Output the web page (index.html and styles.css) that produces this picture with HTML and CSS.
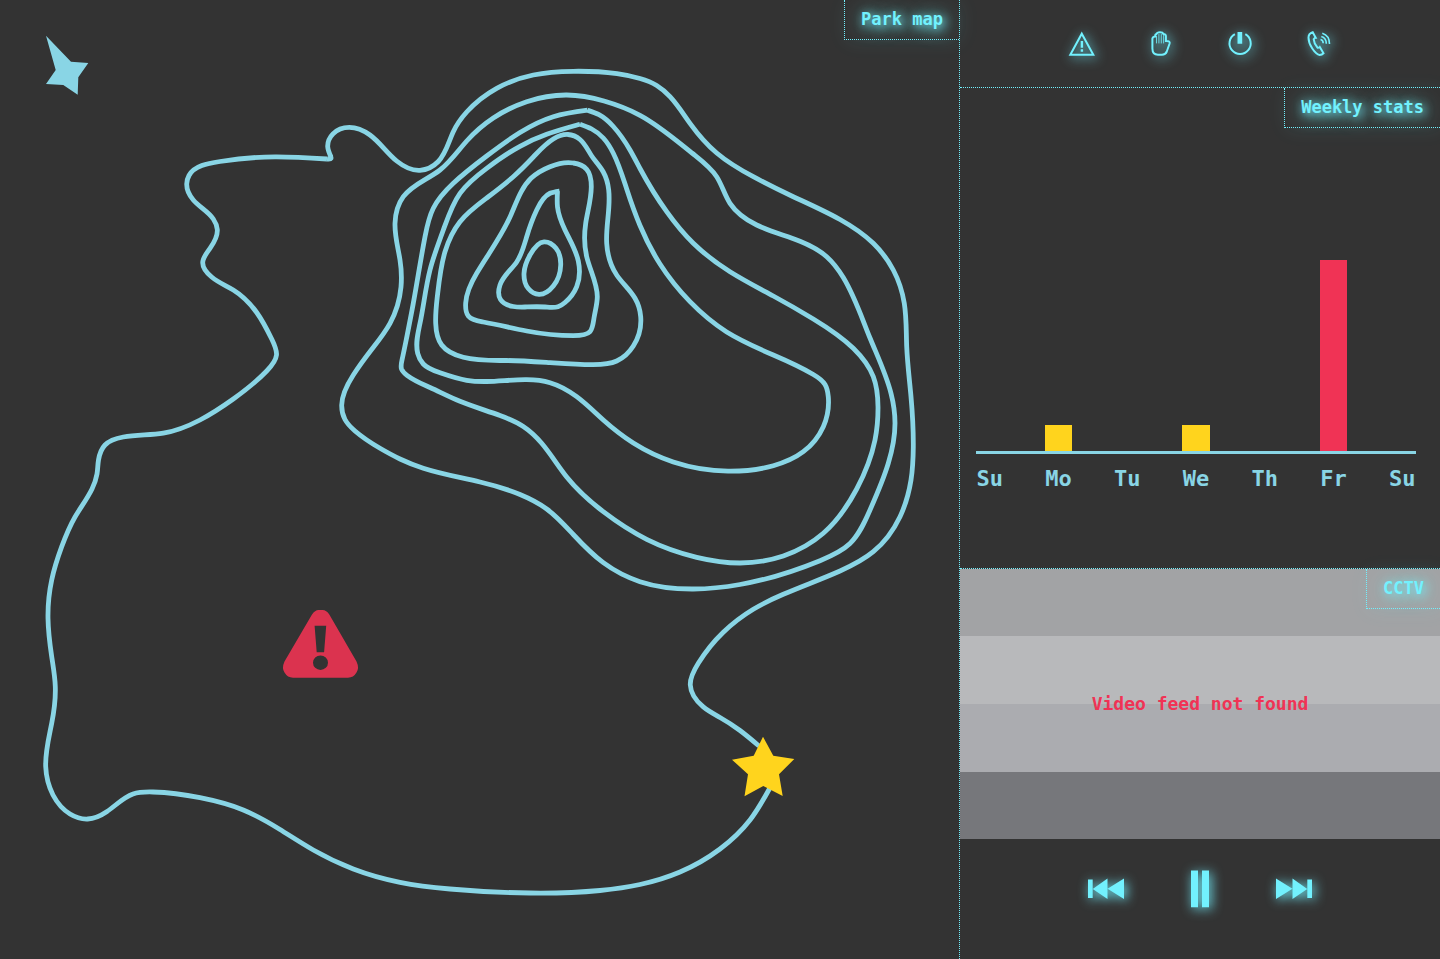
FILE: index.html
```html
<!DOCTYPE html>
<html lang="en">
<head>
<meta charset="utf-8">
<meta name="viewport" content="width=device-width, initial-scale=1">
<title>Park control</title>
<link rel="stylesheet" href="styles.css">
</head>
<body>
<div class="dashboard">
  <main class="map">
    <h2 class="panel-label">Park map</h2>
    <svg class="map-drawing" viewBox="0 0 959 959" role="img" aria-label="Contour map of the park">
      <path class="compass" d="M46 35.7 71 61.7 88.3 63 78.3 77.3 77.7 94.7 63.3 85 46 84 55.7 70Z"/>
      <g class="contours" id="contours"></g>
      <path class="alert" fill-rule="evenodd" d="M312 614.6Q315 610 318.500 610H322.500Q326.500 610 329.300 614.600L356.500 661.500Q359.500 668 356.500 672.500Q353.500 677.700 348 677.700H293Q287.500 677.700 284.500 672.500Q281.500 668 284.500 661.500ZM314.600 625.700 316.700 652.200H324.100L326.200 625.700ZM328 662.700A7.500 7.300 0 1 0 313 662.700A7.500 7.300 0 1 0 328 662.700Z"/>
      <path class="entrance" d="M763 736.700 773.300 755.700 794.300 759 779 774.300 782.700 796 763.300 786 744.500 796.200 748 774.300 732 759.700 753.700 755.700Z"/>
    </svg>
  </main>
  <aside class="side">
    <nav class="actions" aria-label="Actions">
      <button class="icon-button" type="button" aria-label="Raise alert">
        <svg class="icon" viewBox="0 0 28 28"><path class="line" d="M13.800 3.700 25.300 24.700H2.300Z"/><path class="solid" d="M12.700 11h2.400v6.700h-2.400zM12.700 19.300h2.400v2.400h-2.400z"/></svg>
      </button>
      <button class="icon-button" type="button" aria-label="Stop">
        <svg class="icon" viewBox="0 0 28 28"><path class="line" d="M5.400 8.500V18.500Q5.400 24.700 11 24.700H15Q18.500 24.700 19.800 21.500L22.600 13.500Q23.400 10.700 18.900 10.900V6Q18.500 4 16.500 4Q15.800 2.300 13 2.300Q10 2.300 9.300 4.200Q8 4 8.300 6.500Q6 6.500 5.400 8.500Z"/><path class="hairline" d="M9.500 6v7.400M11.900 4v9.400M14.300 4v9.400M16.600 5v8.400"/></svg>
      </button>
      <button class="icon-button" type="button" aria-label="Power">
        <svg class="icon" viewBox="0 0 28 28"><path class="line" d="M8.900 4.200A10.600 10.600 0 1 0 19.300 4.200"/><path class="solid" d="M11.500 2h4.700v11.700h-4.700z"/></svg>
      </button>
      <button class="icon-button" type="button" aria-label="Call">
        <svg class="icon" viewBox="0 0 28 28"><path class="line" d="M7.700 2.300Q3.600 3.500 3.500 7.500Q3.500 13 7.300 18.500Q11.300 24.500 14.600 24.900Q17 24.900 18.500 23.300L14.800 17Q14 18 12.500 17.700Q9 13.500 8.700 9.200Q9.500 7.800 10.700 7.800Z"/><path class="hairline waves" d="M15.500 9.500Q18.200 10 18.200 13.300M16.300 6.400Q21.300 7.700 21.300 13.700M17.300 3.200Q24.500 5.500 24.500 14"/></svg>
      </button>
    </nav>

    <section class="stats">
      <h2 class="panel-label">Weekly stats</h2>
      <div class="plot" role="img" aria-label="Incidents per day">
        <div class="bar" style="height:0%"></div>
        <div class="bar" style="height:10%"></div>
        <div class="bar" style="height:0%"></div>
        <div class="bar" style="height:10%"></div>
        <div class="bar" style="height:0%"></div>
        <div class="bar bar-high" style="height:72%"></div>
        <div class="bar" style="height:0%"></div>
      </div>
      <div class="days">
        <span class="day">Su</span><span class="day">Mo</span><span class="day">Tu</span><span class="day">We</span><span class="day">Th</span><span class="day">Fr</span><span class="day">Su</span>
      </div>
    </section>

    <section class="cctv">
      <h2 class="panel-label">CCTV</h2>
      <p class="feed-message">Video feed not found</p>
    </section>

    <div class="controls">
      <button class="media-button" type="button" aria-label="Previous">
        <svg class="icon" viewBox="0 0 36 40"><path class="solid" d="M0 10.500h4.700v18.500H0zM4.700 19.900 19.500 9.500v10.300L36 9.500V30L19.500 19.800V30z"/></svg>
      </button>
      <button class="media-button" type="button" aria-label="Pause">
        <svg class="icon" viewBox="0 0 36 40"><path class="solid" d="M9 1.500h7v36.700H9zM20 1.500h7v36.700h-7z"/></svg>
      </button>
      <button class="media-button" type="button" aria-label="Next">
        <svg class="icon" viewBox="0 0 36 40"><path class="solid" d="M36 10.500h-4.700v18.500H36zM31.300 19.900 16.500 9.500v10.300L0 9.500V30l16.500-10.200V30z"/></svg>
      </button>
    </div>
  </aside>
</div>
<script src="map.js"></script>
</body>
</html>
```
FILE: styles.css
```css
:root {
  --bg: #333333;
  --glow: #72f1fe;
  --line: #89d5e5;
  --yellow: #ffd41d;
  --red: #f03355;
}

* {
  box-sizing: border-box;
}

body {
  margin: 0;
  background: var(--bg);
  color: var(--line);
  font-family: "DejaVu Sans Mono", "Liberation Mono", monospace;
}

.dashboard {
  display: grid;
  grid-template-columns: 2fr 1fr;
  min-height: 100vh;
}

.map {
  position: relative;
  border-right: 1px dotted var(--glow);
}

.map-drawing {
  display: block;
  width: 100%;
  height: auto;
}

.contours {
  fill: none;
  stroke: var(--line);
  stroke-width: 4.8;
  stroke-linejoin: round;
}

.compass {
  fill: var(--line);
}

.alert {
  fill: #db334f;
}

.entrance {
  fill: var(--yellow);
}

.panel-label {
  position: absolute;
  top: 0;
  right: 0;
  margin: 0;
  padding: 0 16px;
  border: 1px dotted var(--glow);
  border-width: 0 0 1px 1px;
  color: var(--glow);
  font-size: 17px;
  font-weight: 700;
  line-height: 39px;
  text-shadow: 2px 2px 10px var(--glow), 2px 2px 20px var(--glow);
  box-shadow: 2px 2px 20px rgba(114, 241, 254, 0.08);
}

.side {
  display: flex;
  flex-direction: column;
  min-width: 0;
}

.actions {
  display: flex;
  align-items: center;
  justify-content: center;
  gap: 51px;
  height: 88px;
  border-bottom: 1px dotted var(--glow);
}

.icon-button,
.media-button {
  padding: 0;
  border: 0;
  background: none;
  color: var(--glow);
  cursor: pointer;
}

.icon-button {
  width: 28px;
  height: 28px;
}

.media-button {
  width: 36px;
  height: 40px;
}

.icon {
  display: block;
  width: 100%;
  height: 100%;
  overflow: visible;
  filter: drop-shadow(2px 2px 6px var(--glow));
}

.line {
  fill: none;
  stroke: currentColor;
  stroke-width: 2;
}

.hairline {
  fill: none;
  stroke: currentColor;
  stroke-width: 0.8;
}

.waves {
  stroke-width: 1.6;
}

.solid {
  fill: currentColor;
}

.stats {
  position: relative;
  display: flex;
  flex-direction: column;
  gap: 10px;
  padding: 98px 24px 74px 16px;
  border-bottom: 1px dotted var(--glow);
}

.plot,
.days {
  display: flex;
  justify-content: space-between;
}

.plot {
  align-items: flex-end;
  height: 268px;
  border-bottom: 3px solid var(--line);
}

.bar {
  width: 6.25%;
  background: var(--yellow);
}

.bar-high {
  background: var(--red);
}

.day {
  display: flex;
  justify-content: center;
  width: 6.25%;
  font-size: 22px;
  font-weight: 700;
  line-height: 30px;
}

.cctv {
  position: relative;
  display: grid;
  place-items: center;
  aspect-ratio: 16 / 9;
  background: linear-gradient(#a2a3a5 25%, #b8b9bb 25% 50%, #abacb0 50% 75%, #76777b 75%);
}

.feed-message {
  margin: 0;
  color: var(--red);
  font-size: 18px;
  font-weight: 700;
  line-height: 24px;
}

.controls {
  display: flex;
  justify-content: center;
  gap: 58px;
  padding: 30px 0 48px;
}
```
FILE: map.js
```js
// Contour lines as x,y pairs. "closed" rings are smooth all the way round;
// the others start and finish at a sharp corner.
const contours = [
  { points: "759,746 740,730.5 720,717.5 703,706.7 690.3,685 698.3,663.3 723.3,632.3 753.3,609.3 783.3,594.3 840,571 873.3,551.7 900,516.7 911,480 913.3,446.7 911,396.7 906.7,346.7 904.3,303.3 893.3,270 873.3,243.3 840,219.5 793.3,196.7 753.3,176.7 716.7,153 690,123.3 670,96.7 656.7,85.5 640,78.5 617,73.7 573.3,71.3 533.3,75 496.7,88.3 466.7,112 453.3,131.7 438.3,161.5 420,170.3 396.7,161 370,135 349.3,127.3 333,133.8 327.7,146.7 331,157" },
  { points: "330.500,155.500 331,158.500 327,159" },
  { points: "327,159 275,156.8 220,161.5 189,175.5 186.7,184 193.3,200 213.3,219 217.3,229.5 210,248.3 202.7,262.7 211.7,277 233.3,290 256.7,312.5 271.7,339 276.5,355 266.7,371 233.3,399 200,420 163.3,433.2 123.3,437 105,445 98.5,460 97,474 92,489 75,517 61.7,546.7 51.7,580 48,618.3 51.7,656.7 55.3,686.7 51.7,723.3 45.7,766.7 53,795 70,814 87.7,819 106.7,811.7 133,794 153,792 200,797.7 243.3,810 280,829.5 313.3,850 353.3,869 400,882.300 450,889 530,893 600,890.500 640,884.500 680,872 720,849 750,820 771,786" },
  { closed: true, points: "566.7,95 526.7,101.7 493.3,118 466.7,141 440,170 403.3,196.7 395,223.3 400,260 401,287 390,323.3 372,349 353.3,375 341.7,405 345,419.500 355,431 380,448.300 400,459 423.3,468.3 480,482 520,494.500 546.7,509 573.3,534.500 603.3,562.700 640,581.700 693.3,589 740,584.500 820,560.700 850,543.500 870,510 888.3,463.300 895,423.300 891,393.300 870,338 843.3,277.500 826.7,256.700 800,241.200 756.7,225 730,203.300 716.7,176.700 693.3,154 640,115.300 604,101" },
  { points: "587.500,110.200 553.3,116.700 520,132.500 486.7,156 453.3,183.300 433.3,208.300 425,236.700 413.3,303.300 407,336 402,360 401.500,369 407,375.300 430,387.500 460,401.300 500,415.500 523.3,426.500 541.7,443.300 566.7,477 603.3,511.700 646.7,539.300 696.7,557.300 740,563 783.3,556 823.3,533.300 856.7,489 875,440 878,406.700 873.3,376.700 853.3,348.300 813.3,319 773.3,296 730,271.700 693.3,243.300 666.7,211.700 640,168.500 630,150 613.3,126.500 599,114.700 587.500,110.200" },
  { points: "580,124.200 546.7,134.300 520,146.300 486.7,168.300 460,193.300 443.3,230 430,270 420,323.300 417.7,353.300 423.3,364 440,372.700 466.7,380.300 486.7,381.500 526.7,379.700 550,382.700 576.7,396.700 603.3,420 633.3,443 673.3,462 728,471.200 773.3,465.700 803.3,451.700 823.3,426.700 828.300,396.700 825,384.500 813.3,374.500 773.3,355 726.7,332 690,301.700 660,264 640,225.500 626.7,189 613.3,153.300 603.3,138 591.700,129 580,124.200" },
  { closed: true, points: "568,134.500 553.3,139 533.3,157 513.3,176.700 486.7,198 460,221.700 445,251.700 437.3,296.700 435.700,323.300 441.700,345 463.300,357.300 506.700,360.500 550,362.700 593.300,364.700 616.700,361 633.300,346 640.700,316.700 635,298.300 616.700,275 606.700,243.300 608.700,190 603.300,172 591.700,156 580,139.500" },
  { closed: true, points: "573.300,163 550,166.700 531,178.300 510,217 476.700,273.300 465.700,303 468.300,316 483.300,322 526.700,331 573.300,335.700 590,331.700 594,318 597.300,296.700 586.700,256.700 585.700,223.300 591.300,186.700 586.700,169.300" },
  { points: "559.500,191 550,193.300 536.700,210 526.700,236.700 516.700,262 500,285 500.500,299.500 513.300,306.500 525,307 545,307 558,306.700 565,302.500 576.700,286.700 578.300,261 565,230 557.500,207 557.500,191" },
  { closed: true, points: "544,241.800 530,255 524,273.300 528.300,288.500 539,294.300 553.300,286 560.700,265 556,248.300" }
];

// Runs a chord-length cubic spline through the points and returns path data.
function curve({ points, closed }) {
  const p = points.split(" ").map(pair => pair.split(",").map(Number));
  const n = p.length;
  const segments = closed ? n : n - 1;
  const next = i => (i + 1) % n;
  const prev = i => (i - 1 + n) % n;
  const h = p.map((a, i) => Math.hypot(p[next(i)][0] - a[0], p[next(i)][1] - a[1]) || 1);
  const slope = (i, k) => (p[next(i)][k] - p[i][k]) / h[i];
  const m = p.map(() => [0, 0]);

  for (let pass = 0; pass < 60; pass++) {
    for (let i = 0; i < n; i++) {
      for (const k of [0, 1]) {
        if (!closed && i === 0) {
          m[i][k] = (3 * slope(0, k) - m[1][k]) / 2;
        } else if (!closed && i === n - 1) {
          m[i][k] = (3 * slope(n - 2, k) - m[n - 2][k]) / 2;
        } else {
          const a = h[prev(i)], b = h[i];
          m[i][k] = (3 * (b * slope(prev(i), k) + a * slope(i, k))
            - b * m[prev(i)][k] - a * m[next(i)][k]) / (2 * (a + b));
        }
      }
    }
  }

  let d = "M" + p[0];
  for (let i = 0; i < segments; i++) {
    const j = next(i);
    const h1 = [0, 1].map(k => p[i][k] + m[i][k] * h[i] / 3);
    const h2 = [0, 1].map(k => p[j][k] - m[j][k] * h[i] / 3);
    d += "C" + [...h1, ...h2, ...p[j]].map(x => x.toFixed(1)).join(" ");
  }
  return closed ? d + "Z" : d;
}

const layer = document.getElementById("contours");
for (const ring of contours) {
  const path = document.createElementNS("http://www.w3.org/2000/svg", "path");
  path.setAttribute("d", curve(ring));
  layer.append(path);
}
```
